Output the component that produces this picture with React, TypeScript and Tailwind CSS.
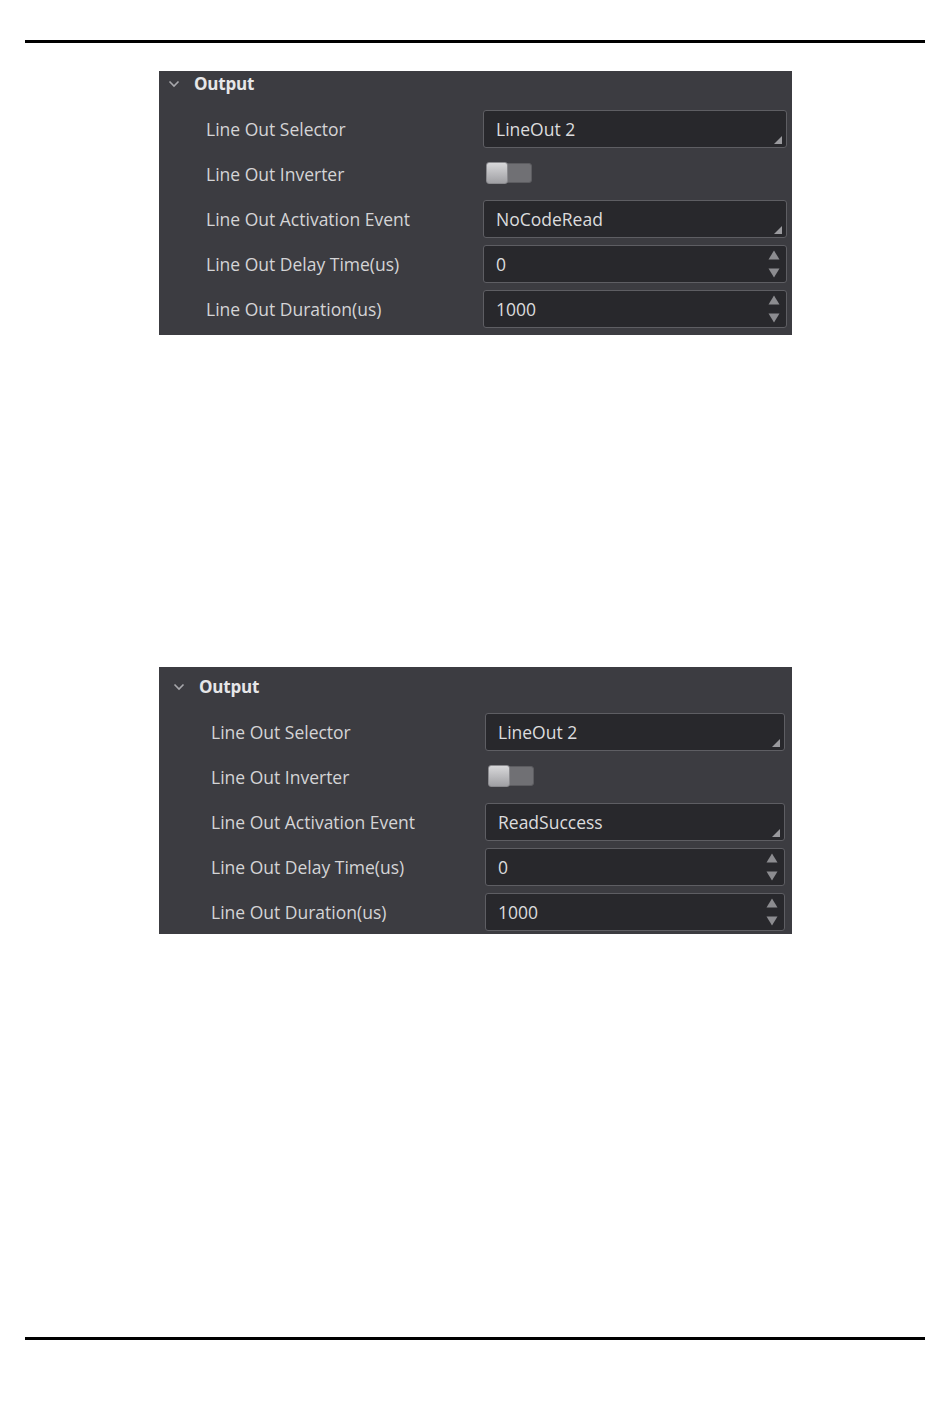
import React from "react";

type Row =
  | { label: string; kind: "select"; value: string }
  | { label: string; kind: "toggle" }
  | { label: string; kind: "number"; value: string };

const Chevron = () => (
  <svg width="12" height="8" viewBox="0 0 12 8" className="block">
    <path d="M1.5 1.5 L6 6 L10.5 1.5" fill="none" stroke="#a8a8ac" strokeWidth="1.6" />
  </svg>
);

const Corner = () => (
  <svg width="8" height="8" viewBox="0 0 8 8" className="absolute right-[4px] bottom-[3px]">
    <polygon points="8,0 8,8 0,8" fill="#9a9a9e" />
  </svg>
);

const Spinner = () => (
  <div className="absolute right-[6px] top-0 bottom-0 flex flex-col justify-between py-[4px]">
    <svg width="12" height="10" viewBox="0 0 12 10" className="block">
      <polygon points="6,0.5 11.5,9.5 0.5,9.5" fill="#8c8c90" />
    </svg>
    <svg width="12" height="10" viewBox="0 0 12 10" className="block">
      <polygon points="0.5,0.5 11.5,0.5 6,9.5" fill="#8c8c90" />
    </svg>
  </div>
);

const Toggle = () => (
  <div className="relative w-[46px] h-[22px] -mt-[3px]">
    <div className="absolute left-[18px] right-0 top-[1px] bottom-[1px] rounded-[3px] bg-[#707074] border border-[#5c5c60]" />
    <div className="absolute left-0 top-0 w-[22px] h-[22px] rounded-[3px] border border-[#8a8a8e] bg-gradient-to-b from-[#d8d8da] to-[#a0a0a4]" />
  </div>
);

function Panel({
  rows,
  headerH,
  gapAfterHeader,
  chevronPl,
  labelPl,
  inputW,
  toggleOffset,
  labelW,
  pb,
}: {
  rows: Row[];
  headerH: string;
  gapAfterHeader: string;
  chevronPl: string;
  labelPl: string;
  inputW: string;
  toggleOffset: string;
  labelW: string;
  pb: string;
}) {
  return (
    <div
      className={`ml-[159px] w-[633px] bg-[#3c3c41] text-[#d4d4d6] ${pb}`}
      style={{ fontFamily: '"Open Sans", "Noto Sans", sans-serif' }}
    >
      <div className={`flex items-center ${headerH} ${chevronPl}`}>
        <Chevron />
        <span className="ml-[14px] text-[17px] font-bold text-[#e6e6e8] tracking-[-0.2px]">Output</span>
      </div>
      <div className={gapAfterHeader} />
      {rows.map((r) => (
        <div key={r.label} className="flex items-center h-[45px] pt-[1px]">
          <div className={`${labelW} ${labelPl} shrink-0 text-[17.5px]`}>{r.label}</div>
          {r.kind === "toggle" ? (
            <div className={toggleOffset}>
              <Toggle />
            </div>
          ) : (
            <div
              className={`relative ${inputW} h-[38px] rounded-[3px] border border-[#5e5e63] bg-[#28282c] flex items-center pl-[12px] text-[17.5px] text-[#dcdcde]`}
            >
              {r.value}
              {r.kind === "select" ? <Corner /> : <Spinner />}
            </div>
          )}
        </div>
      ))}
    </div>
  );
}

export default function App() {
  const rows1: Row[] = [
    { label: "Line Out Selector", kind: "select", value: "LineOut 2" },
    { label: "Line Out Inverter", kind: "toggle" },
    { label: "Line Out Activation Event", kind: "select", value: "NoCodeRead" },
    { label: "Line Out Delay Time(us)", kind: "number", value: "0" },
    { label: "Line Out Duration(us)", kind: "number", value: "1000" },
  ];
  const rows2: Row[] = [
    { label: "Line Out Selector", kind: "select", value: "LineOut 2" },
    { label: "Line Out Inverter", kind: "toggle" },
    { label: "Line Out Activation Event", kind: "select", value: "ReadSuccess" },
    { label: "Line Out Delay Time(us)", kind: "number", value: "0" },
    { label: "Line Out Duration(us)", kind: "number", value: "1000" },
  ];
  return (
    <div className="w-[950px] h-[1408px] bg-white overflow-hidden">
      <div className="pt-[40px]">
        <div className="mx-[25px] h-[3px] bg-black" />
      </div>
      <div className="mt-[28px]">
        <Panel
          rows={rows1}
          headerH="h-[26px]"
          gapAfterHeader="h-[9px]"
          chevronPl="pl-[168px] -ml-[159px]"
          labelPl="pl-[47px]"
          labelW="w-[324px]"
          inputW="w-[304px]"
          toggleOffset="pl-[3px]"
          pb="pb-[4px]"
        />
      </div>
      <div className="mt-[332px]">
        <Panel
          rows={rows2}
          headerH="h-[40px]"
          gapAfterHeader="h-[2px]"
          chevronPl="pl-[173px] -ml-[159px]"
          labelPl="pl-[52px]"
          labelW="w-[326px]"
          inputW="w-[300px]"
          toggleOffset="pl-[3px]"
          pb="pb-0"
        />
      </div>
      <div className="mt-[403px]">
        <div className="mx-[25px] h-[3px] bg-black" />
      </div>
    </div>
  );
}
